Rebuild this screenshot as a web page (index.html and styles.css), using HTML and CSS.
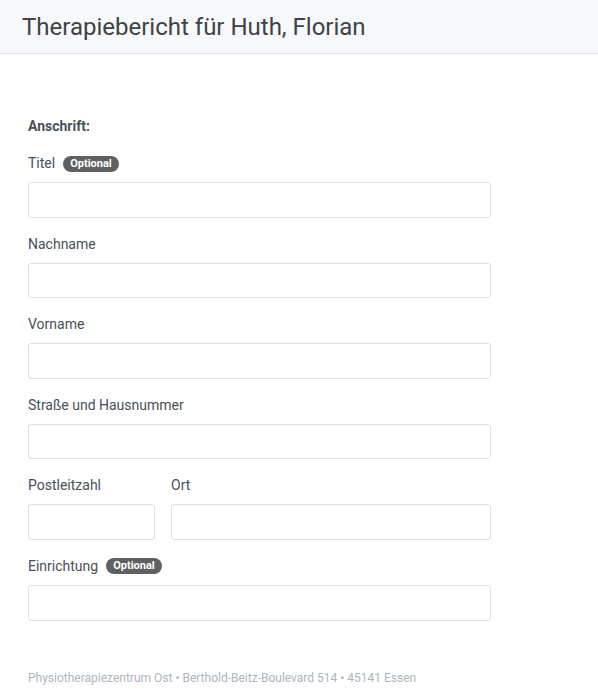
FILE: index.html
```html
<!DOCTYPE html>
<html lang="de">
<head>
  <meta charset="utf-8">
  <link rel="stylesheet" href="styles.css">
</head>
<body>
  <header class="page-header">
    <h1>Therapiebericht für Huth, Florian</h1>
  </header>

  <main class="content">
    <form class="address-form">
      <h2 class="section-title">Anschrift:</h2>

      <div class="field">
        <label for="titel">Titel <span class="badge">Optional</span></label>
        <input type="text" id="titel" class="input">
      </div>

      <div class="field">
        <label for="nachname">Nachname</label>
        <input type="text" id="nachname" class="input">
      </div>

      <div class="field">
        <label for="vorname">Vorname</label>
        <input type="text" id="vorname" class="input">
      </div>

      <div class="field">
        <label for="strasse">Straße und Hausnummer</label>
        <input type="text" id="strasse" class="input">
      </div>

      <div class="field-row">
        <div class="field field-plz">
          <label for="plz">Postleitzahl</label>
          <input type="text" id="plz" class="input">
        </div>
        <div class="field field-ort">
          <label for="ort">Ort</label>
          <input type="text" id="ort" class="input">
        </div>
      </div>

      <div class="field">
        <label for="einrichtung">Einrichtung <span class="badge">Optional</span></label>
        <input type="text" id="einrichtung" class="input">
      </div>
    </form>

    <footer class="page-footer">
      Physiotherapiezentrum Ost • Berthold-Beitz-Boulevard 514 • 45141 Essen
    </footer>
  </main>
</body>
</html>
```

FILE: styles.css
```css
body {
  margin: 0;
  font-family: Roboto, "Noto Sans", Arial, sans-serif;
  color: #495057;
  background: #fff;
}

.page-header {
  background-color: #f8f9fa;
  border-bottom: 1px solid #dee2e6;
  height: 53px;
  padding: 0 22px;
  display: flex;
  align-items: center;
}

.page-header h1 {
  margin: 0;
  font-size: 24px;
  font-weight: 400;
  color: #3d4349;
}

.content {
  padding: 62px 28px 0;
  width: 463px;
}

.section-title {
  margin: 0 0 16px;
  font-size: 14px;
  font-weight: 700;
  line-height: 21px;
  color: #495057;
}

.field {
  display: flex;
  flex-direction: column;
  margin-bottom: 16px;
}

.field label {
  font-size: 14px;
  line-height: 21px;
  margin-bottom: 8px;
  display: flex;
  align-items: center;
}

.badge {
  display: inline-block;
  margin-left: 8px;
  padding: 0 7px;
  height: 16px;
  line-height: 16px;
  border-radius: 8px;
  background-color: #5f6062;
  color: #fff;
  font-size: 11px;
  font-weight: 700;
}

.input {
  box-sizing: border-box;
  height: 35.6px;
  width: 100%;
  border: 1px solid #dfe1e4;
  border-radius: 3px;
  background: #fff;
  padding: 6px 10px;
  font: inherit;
}

.field-row {
  display: flex;
  gap: 16px;
}

.field-plz {
  width: 127px;
}

.field-ort {
  flex: 1;
}

.page-footer {
  margin-top: 48px;
  font-size: 12px;
  line-height: 18px;
  color: #adb5bd;
}
```
